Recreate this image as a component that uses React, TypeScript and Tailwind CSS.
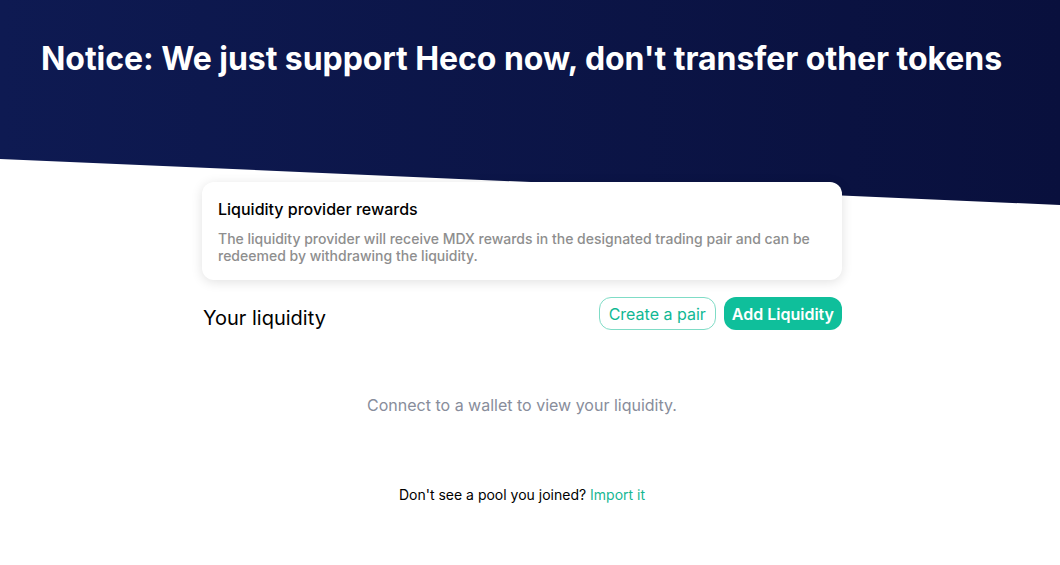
import React from "react";

export default function App() {
  return (
    <div className="relative min-h-[565px] w-full bg-white" style={{ fontFamily: "Inter, 'Noto Sans', sans-serif" }}>
      <div
        className="absolute left-0 top-0 h-[206px] w-full bg-gradient-to-r from-[#0e1a52] to-[#09103d]"
        style={{ clipPath: "polygon(0 0, 100% 0, 100% 205px, 0 159px)" }}
      />
      <div className="relative flex flex-col">
        <h1 className="pl-[41px] pt-[40px] text-[32px] font-bold leading-[38px] tracking-[-0.05px] text-white">
          Notice: We just support Heco now, don't transfer other tokens
        </h1>
        <div className="ml-[202px] mt-[104px] flex w-[640px] flex-col">
          <div className="rounded-xl bg-white px-4 pb-[16px] pt-[16px] shadow-[0_2px_12px_rgba(0,0,0,0.12)]">
            <div className="text-[16px] font-medium leading-[22px] text-black">Liquidity provider rewards</div>
            <p className="mt-[10px] text-[14px] font-medium leading-[17px] text-[#8e8e8e]">
              The liquidity provider will receive MDX rewards in the designated trading pair and can be redeemed by withdrawing the liquidity.
            </p>
          </div>
          <div className="mt-[17px] flex items-center justify-between">
            <div className="mt-[8px] pl-px text-[20px] leading-[24px] text-black">Your liquidity</div>
            <div className="flex gap-2">
              <button className="h-[33px] rounded-xl border border-[#7fdcc6] px-[9px] text-[16px] text-[#10b894]">Create a pair</button>
              <button className="h-[33px] rounded-xl bg-[#0fbf9b] px-[8px] text-[16px] font-semibold text-white">Add Liquidity</button>
            </div>
          </div>
          <div className="mt-[65px] text-center text-[16px] leading-[20px] text-[#888d9b]">Connect to a wallet to view your liquidity.</div>
          <div className="mt-[71px] text-center text-[14px] leading-[18px] text-black">
            Don't see a pool you joined? <span className="text-[#17b793]">Import it</span>
          </div>
        </div>
      </div>
    </div>
  );
}
